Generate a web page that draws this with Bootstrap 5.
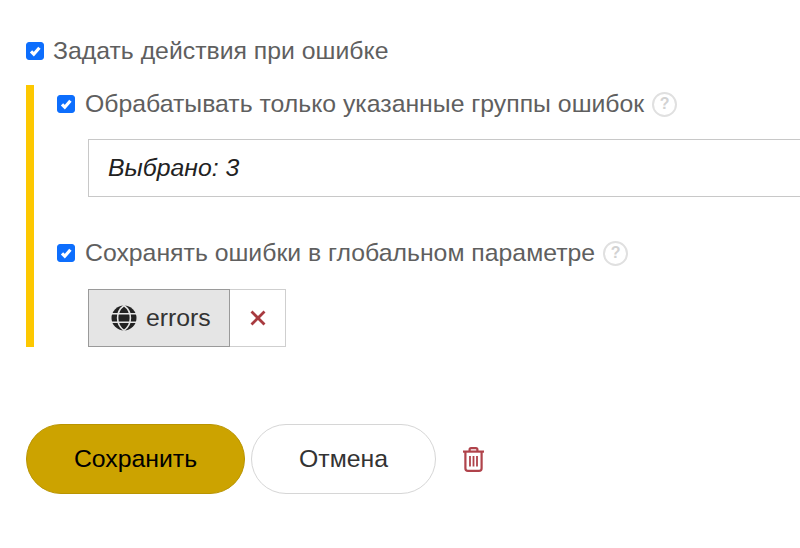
<!DOCTYPE html>
<html lang="ru">
<head>
    <meta charset="UTF-8">
    <meta name="viewport" content="width=device-width, initial-scale=1.0">
    <title>Действия при ошибке</title>
    <link href="https://cdn.jsdelivr.net/npm/bootstrap@5.3.0/dist/css/bootstrap.min.css" rel="stylesheet">
    <style>
        html, body { height: 548px; overflow: hidden; }
        body { background: #fff; font-family: "Liberation Sans", Arial, sans-serif; color: #5f5f5f; }
        .page-wrap { padding: 36px 0 0 26px; }
        .opt-row { height: 30px; font-size: 24.8px; line-height: 30px; gap: 9px; }
        .opt-row .form-check-input { width: 18px; height: 18px; margin: 0; flex: none; border-radius: 3px; }
        .opt-row .form-check-input:checked[type=checkbox] { background-image: url("data:image/svg+xml,%3csvg xmlns='http://www.w3.org/2000/svg' viewBox='0 0 20 20'%3e%3cpath fill='none' stroke='%23fff' stroke-width='4' d='m5 10.5 3.5 3.5 7-8'/%3e%3c/svg%3e"); }
        .sub-block { margin-top: 19px; height: 262px; border-left: 8px solid #fdc800; padding: 4px 0 0 23px; }
        .sub-block .opt-row { gap: 10px; }
        .help-mark { width: 25px; height: 25px; margin-left: -2px; border: 2px solid #e0e0e0; border-radius: 50%; color: #d2d2d2; font-size: 16px; font-weight: 700; line-height: 1; }
        .pick-box { height: 58px; margin: 20px 0 41px 31px; padding: 0 19px; border: 1px solid #c8c8c8; border-right: 0; background: #fff; font-size: 24.8px; font-style: italic; color: #222; }
        .chip-group { margin: 21px 0 0 31px; height: 58px; width: 198px; }
        .chip-name { width: 142px; gap: 9px; padding-left: 22px; background: #e5e5e5; border: 1px solid #9a9a9a; font-size: 24.8px; color: #333; }
        .chip-del { width: 56px; border: 1px solid #cfcfcf; border-left: 0; }
        .action-row { margin-top: 77px; height: 70px; }
        .action-row .btn { height: 70px; border-radius: 35px; font-size: 24.8px; padding: 0; }
        .btn-save { width: 219px; background: #cca300; border: 1px solid #b99400; color: #000; }
        .btn-cancel { width: 185px; margin-left: 6px; background: #fff; border: 1px solid #d6d6d6; color: #333; }
        .trash-link { margin-left: 26px; }
    </style>
</head>
<body>
    <div class="page-wrap">
        <!-- Главный чекбокс -->
        <div class="opt-row d-flex align-items-center">
            <input class="form-check-input" type="checkbox" id="optMain" checked>
            <label class="form-check-label" for="optMain">Задать действия при ошибке</label>
        </div>

        <div class="sub-block">
            <div class="opt-row d-flex align-items-center">
                <input class="form-check-input" type="checkbox" id="optGroups" checked>
                <label class="form-check-label" for="optGroups">Обрабатывать только указанные группы ошибок</label>
                <span class="help-mark d-inline-flex align-items-center justify-content-center">?</span>
            </div>
            <div class="pick-box d-flex align-items-center">Выбрано: 3</div>

            <div class="opt-row d-flex align-items-center">
                <input class="form-check-input" type="checkbox" id="optGlobal" checked>
                <label class="form-check-label" for="optGlobal">Сохранять ошибки в глобальном параметре</label>
                <span class="help-mark d-inline-flex align-items-center justify-content-center">?</span>
            </div>
            <div class="chip-group d-flex">
                <div class="chip-name d-flex align-items-center">
                    <svg width="26" height="26" viewBox="0 0 26 26" aria-hidden="true">
                        <circle cx="13" cy="13" r="12.5" fill="#222"/>
                        <path d="M0 8.7H26M0 17.3H26" stroke="#e5e5e5" stroke-width="1.6" fill="none"/>
                        <path d="M13 .5C8 4 6.6 9 6.6 13s1.4 9 6.4 12.5M13 .5C18 4 19.4 9 19.4 13s-1.4 9-6.4 12.5" stroke="#e5e5e5" stroke-width="1.6" fill="none"/>
                    </svg>
                    <span>errors</span>
                </div>
                <div class="chip-del d-flex align-items-center justify-content-center">
                    <svg width="16" height="16" viewBox="0 0 16 16" aria-hidden="true">
                        <path d="M1.5 1.5L14.5 14.5M14.5 1.5L1.5 14.5" stroke="#a83a3f" stroke-width="2.8" fill="none"/>
                    </svg>
                </div>
            </div>
        </div>

        <div class="action-row d-flex align-items-center">
            <button type="button" class="btn btn-save">Сохранить</button>
            <button type="button" class="btn btn-cancel">Отмена</button>
            <a class="trash-link d-flex" href="#" aria-label="Удалить">
                <svg width="23" height="25" viewBox="0 0 23 25" fill="none" stroke="#b0434b" stroke-width="2.2" aria-hidden="true">
                    <path d="M1 4.6H22"/>
                    <path d="M7.6 4.4V2.6C7.6 1.7 8.2 1.1 9.1 1.1H13.9C14.8 1.1 15.4 1.7 15.4 2.6V4.4"/>
                    <path d="M3.4 4.8V21.2C3.4 22.8 4.4 23.9 6 23.9H17C18.6 23.9 19.6 22.8 19.6 21.2V4.8"/>
                    <path d="M8 9V19.5M11.5 9V19.5M15 9V19.5" stroke-width="1.8"/>
                </svg>
            </a>
        </div>
    </div>

    <script src="https://cdn.jsdelivr.net/npm/bootstrap@5.3.0/dist/js/bootstrap.bundle.min.js"></script>
</body>
</html>
